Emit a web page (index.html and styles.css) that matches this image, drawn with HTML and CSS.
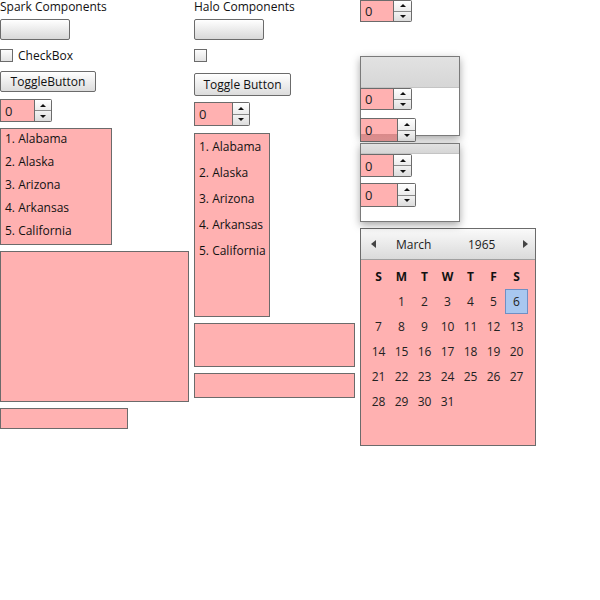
FILE: index.html
```
<!DOCTYPE html>
<html>
<head>
<meta charset="utf-8">
<link rel="stylesheet" href="styles.css">
</head>
<body>
<div class="page">
  <div class="col col-spark">
    <div class="title">Spark Components</div>
    <div class="btn btn-plain"></div>
    <div class="check-row"><span class="check"></span><span class="check-label">CheckBox</span></div>
    <div class="btn btn-toggle">ToggleButton</div>
    <div class="stepper st-spark"><div class="field">0</div><div class="spin"><span class="up"></span><span class="down"></span></div></div>
    <ul class="list list-spark">
      <li>1. Alabama</li><li>2. Alaska</li><li>3. Arizona</li><li>4. Arkansas</li><li>5. California</li>
    </ul>
    <div class="box box-big"></div>
    <div class="box box-small"></div>
  </div>
  <div class="col col-halo">
    <div class="title">Halo Components</div>
    <div class="btn btn-plain"></div>
    <div class="check-row check-row-halo"><span class="check"></span></div>
    <div class="btn btn-toggle btn-toggle-halo">Toggle Button</div>
    <div class="stepper st-halo"><div class="field">0</div><div class="spin"><span class="up"></span><span class="down"></span></div></div>
    <ul class="list list-halo">
      <li>1. Alabama</li><li>2. Alaska</li><li>3. Arizona</li><li>4. Arkansas</li><li>5. California</li>
    </ul>
    <div class="box box-mid"></div>
    <div class="box box-thin"></div>
  </div>
  <div class="col col-right">
    <div class="stepper st-small st-top"><div class="field">0</div><div class="spin"><span class="up"></span><span class="down"></span></div></div>
    <div class="panel panel-one">
      <div class="panel-head head-tall"></div>
      <div class="stepper st-small"><div class="field">0</div><div class="spin"><span class="up"></span><span class="down"></span></div></div>
      <div class="stepper st-large st-shadowed"><div class="field">0</div><div class="spin"><span class="up"></span><span class="down"></span></div></div>
    </div>
    <div class="panel panel-two">
      <div class="panel-head head-short"></div>
      <div class="stepper st-small st-mid"><div class="field">0</div><div class="spin"><span class="up"></span><span class="down"></span></div></div>
      <div class="stepper st-large st-gap"><div class="field">0</div><div class="spin"><span class="up"></span><span class="down"></span></div></div>
    </div>
    <div class="calendar">
      <div class="cal-head">
        <span class="arrow arrow-left"></span>
        <span class="cal-month">March</span>
        <span class="cal-year">1965</span>
        <span class="arrow arrow-right"></span>
      </div>
      <div class="cal-grid">
        <span class="dn">S</span><span class="dn">M</span><span class="dn">T</span><span class="dn">W</span><span class="dn">T</span><span class="dn">F</span><span class="dn">S</span>
        <span></span><span>1</span><span>2</span><span>3</span><span>4</span><span>5</span><span class="sel">6</span>
        <span>7</span><span>8</span><span>9</span><span>10</span><span>11</span><span>12</span><span>13</span>
        <span>14</span><span>15</span><span>16</span><span>17</span><span>18</span><span>19</span><span>20</span>
        <span>21</span><span>22</span><span>23</span><span>24</span><span>25</span><span>26</span><span>27</span>
        <span>28</span><span>29</span><span>30</span><span>31</span>
      </div>
    </div>
  </div>
</div>
</body>
</html>
```

FILE: styles.css
```
html, body {
  margin: 0;
  padding: 0;
  background: #fff;
}
body {
  font-family: "Open Sans", "Noto Sans", sans-serif;
  font-size: 12px;
  color: #111;
}
.page {
  display: flex;
  align-items: flex-start;
}
.col {
  display: flex;
  flex-direction: column;
  align-items: flex-start;
}
.col > * { flex-shrink: 0; }
.col-spark { width: 194px; }
.col-halo { width: 166px; }
.col-right { width: 200px; }

.title {
  line-height: 13px;
  white-space: nowrap;
}

.btn {
  box-sizing: border-box;
  border: 1px solid #6b6b6b;
  border-radius: 2px;
  background: linear-gradient(#ffffff, #d8d8d8);
  display: flex;
  align-items: center;
  justify-content: center;
  white-space: nowrap;
}
.btn-plain {
  width: 70px;
  height: 21px;
  margin-top: 6px;
}
.btn-toggle {
  width: 96px;
  height: 21px;
  margin-top: 9px;
  background: linear-gradient(#ffffff, #dcdcdc);
}
.btn-toggle-halo {
  width: 97px;
  height: 23px;
  margin-top: 11px;
}

.check-row {
  display: flex;
  align-items: center;
  margin-top: 9px;
  height: 13px;
}
.check {
  box-sizing: border-box;
  width: 13px;
  height: 13px;
  border: 1px solid #6b6b6b;
  background: linear-gradient(#fdfdfd, #e2e2e2);
}
.check-label {
  margin-left: 5px;
  line-height: 13px;
}

.stepper {
  display: flex;
  box-sizing: border-box;
  flex-shrink: 0;
}
.field {
  box-sizing: border-box;
  height: 100%;
  border: 1px solid #6b6b6b;
  background: #ffb1b1;
  padding-left: 4px;
  display: flex;
  align-items: center;
  font-size: 13px;
  color: #222;
}
.spin {
  box-sizing: border-box;
  width: 18px;
  height: 100%;
  display: flex;
  flex-direction: column;
  border: 1px solid #6b6b6b;
  border-left: none;
  border-radius: 0 2px 2px 0;
}
.spin span {
  flex: 1;
  display: flex;
  align-items: center;
  justify-content: center;
}
.spin .up {
  background: linear-gradient(#ffffff, #ececec);
  border-bottom: 1px solid #8a8a8a;
}
.spin .down {
  background: linear-gradient(#f2f2f2, #dcdcdc);
}
.spin .up::after {
  content: "";
  border-left: 3px solid transparent;
  border-right: 3px solid transparent;
  border-bottom: 3px solid #111;
}
.spin .down::after {
  content: "";
  border-left: 3px solid transparent;
  border-right: 3px solid transparent;
  border-top: 3px solid #111;
}

.st-spark {
  height: 23px;
  margin-top: 7px;
}
.st-spark .field { width: 35px; }
.st-spark .spin { width: 17px; }

.st-halo {
  height: 24px;
  margin-top: 6px;
}
.st-halo .field { width: 39px; }
.st-halo .spin { width: 17px; }

.st-small {
  height: 22px;
}
.st-small .field { width: 34px; }
.st-mid { height: 23px; }
.st-large {
  height: 24px;
}
.st-large .field { width: 38px; }

.list {
  list-style: none;
  margin: 6px 0 0;
  padding: 0;
  box-sizing: border-box;
  border: 1px solid #6b6b6b;
  background: #ffb1b1;
}
.list-spark {
  width: 112px;
  height: 117px;
  padding-top: 1px;
}
.list-spark li {
  height: 23px;
  line-height: 18px;
  padding-left: 4px;
}
.list-halo {
  width: 76px;
  height: 184px;
  margin-top: 7px;
  padding-top: 4px;
}
.list-halo li {
  height: 26px;
  line-height: 18px;
  padding-left: 4px;
}

.box {
  box-sizing: border-box;
  border: 1px solid #6b6b6b;
  background: #ffb1b1;
}
.box-big {
  width: 189px;
  height: 151px;
  margin-top: 6px;
}
.box-small {
  width: 128px;
  height: 21px;
  margin-top: 6px;
}
.box-mid {
  width: 161px;
  height: 44px;
  margin-top: 6px;
}
.box-thin {
  width: 161px;
  height: 25px;
  margin-top: 6px;
}

.panel {
  box-sizing: border-box;
  width: 100px;
  border: 1px solid #7a7a7a;
  background: #fff;
  box-shadow: 0 3px 8px rgba(0, 0, 0, 0.35);
  display: flex;
  flex-direction: column;
  align-items: flex-start;
}
.panel > * { flex-shrink: 0; }
.panel .stepper { margin-left: -1px; }
.panel-one {
  height: 80px;
  margin-top: 34px;
  position: relative;
}
.panel-two {
  height: 79px;
  margin-top: 7px;
  position: relative;
}
.panel-head {
  align-self: stretch;
  background: linear-gradient(#e2e2e2, #d6d6d6);
  border-bottom: 1px solid #c4c4c4;
}
.head-tall { height: 30px; }
.head-short { height: 9px; }
.panel-one .st-large {
  margin-top: 8px;
}
.st-shadowed .field {
  background: linear-gradient(#ffb1b1 0, #ffb1b1 68%, #d98a8a 70%, #e09393 100%);
}
.st-gap { margin-top: 6px; }

.calendar {
  box-sizing: border-box;
  width: 176px;
  height: 218px;
  margin-top: 6px;
  border: 1px solid #6b6b6b;
  background: #ffb1b1;
}
.cal-head {
  height: 31px;
  background: linear-gradient(#fafafa, #dadada);
  border-bottom: 1px solid #a0a0a0;
  display: flex;
  align-items: center;
  padding-left: 10px;
  box-sizing: border-box;
  color: #222;
}
.arrow {
  width: 0;
  height: 0;
  border-top: 4px solid transparent;
  border-bottom: 4px solid transparent;
}
.arrow-left { border-right: 5px solid #444; }
.arrow-right { border-left: 5px solid #444; }
.cal-month {
  margin-left: 20px;
  width: 72px;
}
.cal-year {
  width: 55px;
}
.cal-grid {
  display: grid;
  grid-template-columns: repeat(7, 23px);
  grid-auto-rows: 25px;
  padding: 4px 0 0 6px;
  color: #222;
}
.cal-grid span {
  display: flex;
  align-items: center;
  justify-content: center;
}
.cal-grid .dn {
  font-weight: bold;
  font-size: 12px;
  color: #111;
}
.cal-grid .sel {
  box-sizing: border-box;
  border: 1px solid #6f8fc4;
  background: #a8c7ef;
}
```
